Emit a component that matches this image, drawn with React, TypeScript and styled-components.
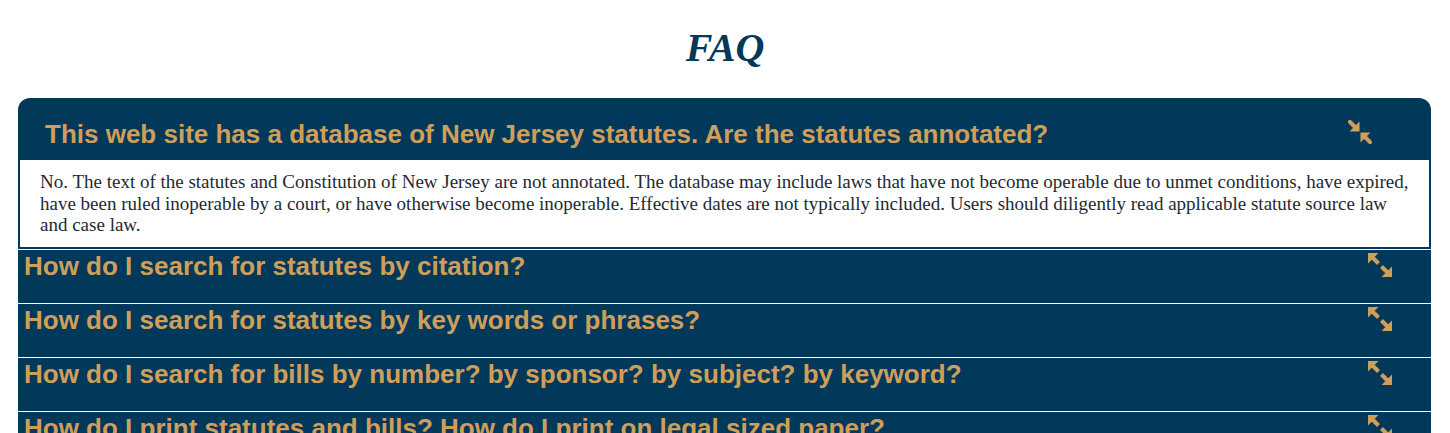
import React from "react";
import styled, { createGlobalStyle } from "styled-components";

const Global = createGlobalStyle`
  html, body { margin: 0; padding: 0; background: #ffffff; }
  body { font-family: "Liberation Serif", "Times New Roman", serif; }
`;

const NAVY = "#02385a";
const GOLD = "#cf9f5a";

const Page = styled.div`
  padding-top: 25px;
`;

const Title = styled.h1`
  margin: 0;
  height: 46px;
  line-height: 46px;
  text-align: center;
  font-family: "Liberation Serif", "Times New Roman", serif;
  font-style: italic;
  font-weight: 700;
  font-size: 40px;
  color: ${NAVY};
`;

const List = styled.div`
  margin: 27px 19px 0 18px;
  display: flex;
  flex-direction: column;
`;

const Item = styled.div<{ $first?: boolean }>`
  display: flex;
  flex-direction: column;
  border-top: ${(p) => (p.$first ? "none" : "1px solid #ffffff")};
`;

const Header = styled.div<{ $open?: boolean }>`
  display: flex;
  justify-content: space-between;
  align-items: flex-start;
  background: ${NAVY};
  box-sizing: border-box;
  height: ${(p) => (p.$open ? "62px" : "53px")};
  padding: ${(p) => (p.$open ? "21px 59px 0 27px" : "1px 39px 0 6px")};
  border-radius: ${(p) => (p.$open ? "12px 12px 0 0" : "0")};
`;

const Question = styled.h2`
  margin: 0;
  font-family: "Liberation Sans", Arial, sans-serif;
  font-weight: 700;
  font-size: 26px;
  line-height: 30px;
  color: ${GOLD};
  white-space: nowrap;
`;

const IconWrap = styled.span<{ $open?: boolean }>`
  display: flex;
  margin-top: ${(p) => (p.$open ? "1px" : "2px")};
  flex: none;
`;

const Answer = styled.div`
  background: #ffffff;
  border: 2px solid ${NAVY};
  border-top: none;
  padding: 11px 20px 11px 20px;
  font-family: "Liberation Serif", "Times New Roman", serif;
  font-size: 19px;
  line-height: 21.5px;
  color: #1f2a33;
`;

const ExpandIcon = () => (
  <svg width="24" height="24" viewBox="0 0 24 24" fill={GOLD}>
    <polygon points="0,0 10.5,0 0,10.5" />
    <line x1="3" y1="3" x2="10.5" y2="10.5" stroke={GOLD} strokeWidth="4" />
    <polygon points="24,24 13.5,24 24,13.5" />
    <line x1="21" y1="21" x2="13.5" y2="13.5" stroke={GOLD} strokeWidth="4" />
  </svg>
);

const CompressIcon = () => (
  <svg width="24" height="24" viewBox="0 0 24 24" fill={GOLD}>
    <polygon points="11.5,11.5 11.5,1.5 1.5,11.5" />
    <line x1="0.5" y1="0.5" x2="7" y2="7" stroke={GOLD} strokeWidth="4" />
    <polygon points="12.5,12.5 22.5,12.5 12.5,22.5" />
    <line x1="23.5" y1="23.5" x2="17" y2="17" stroke={GOLD} strokeWidth="4" />
  </svg>
);

const questions = [
  "How do I search for statutes by citation?",
  "How do I search for statutes by key words or phrases?",
  "How do I search for bills by number? by sponsor? by subject? by keyword?",
  "How do I print statutes and bills? How do I print on legal sized paper?",
];

export default function App() {
  return (
    <>
      <Global />
      <Page>
        <Title>FAQ</Title>
        <List>
          <Item $first>
            <Header $open>
              <Question>
                This web site has a database of New Jersey statutes. Are the statutes annotated?
              </Question>
              <IconWrap $open>
                <CompressIcon />
              </IconWrap>
            </Header>
            <Answer>
              No. The text of the statutes and Constitution of New Jersey are not annotated. The
              database may include laws that have not become operable due to unmet conditions, have
              expired, have been ruled inoperable by a court, or have otherwise become inoperable.
              Effective dates are not typically included. Users should diligently read applicable
              statute source law and case law.
            </Answer>
          </Item>
          {questions.map((q) => (
            <Item key={q}>
              <Header>
                <Question>{q}</Question>
                <IconWrap>
                  <ExpandIcon />
                </IconWrap>
              </Header>
            </Item>
          ))}
        </List>
      </Page>
    </>
  );
}
